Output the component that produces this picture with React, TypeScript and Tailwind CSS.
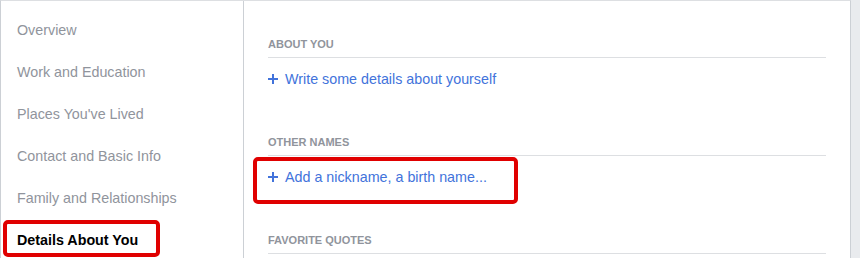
const navItems = [
  "Overview",
  "Work and Education",
  "Places You've Lived",
  "Contact and Basic Info",
  "Family and Relationships",
  "Details About You",
];

const sections = [
  { title: "About You", link: "Write some details about yourself" },
  { title: "Other Names", link: "Add a nickname, a birth name..." },
  { title: "Favorite Quotes", link: "" },
];

function PlusMark() {
  return (
    <svg className="w-[10px] h-[10px] shrink-0" viewBox="0 0 10 10">
      <path d="M5 0v10M0 5h10" stroke="currentColor" strokeWidth={2} />
    </svg>
  );
}

export default function App() {
  return (
    <div className="relative w-[860px] h-[258px] overflow-hidden bg-[#e9ebee] font-['Liberation_Sans',Arial,sans-serif]">
      <div className="flex w-[851px] h-[300px] bg-white border-l border-t border-r border-l-[#ccd0d5] border-t-[#dddfe2] border-r-[#ccd0d5]">
        {/* Sidebar */}
        <div className="w-[243px] shrink-0 border-r border-[#ccd0d5] pt-[9px]">
          {navItems.map((item, idx) => {
            const active = idx === navItems.length - 1;
            return (
              <div
                key={item}
                className={
                  "h-[42px] flex items-center pl-[16px] text-[14.3px] " +
                  (active ? "font-bold text-black" : "text-[#90949c]")
                }
              >
                {item}
              </div>
            );
          })}
        </div>

        {/* Content */}
        <div className="flex-1 px-[24px] pt-[35px]">
          {sections.map((s, idx) => (
            <div key={s.title} className={idx === 0 ? "" : "mt-[46px]"}>
              <div className="border-b border-[#dddfe2] pb-[5px] text-[11px] leading-[16px] font-bold uppercase text-[#90949c]">
                {s.title}
              </div>
              {s.link && (
                <div className="mt-[12px] flex items-center gap-[7px] text-[14.3px] leading-[18px] text-[#4273db]">
                  <PlusMark />
                  <span>{s.link}</span>
                </div>
              )}
            </div>
          ))}
        </div>
      </div>

      {/* Annotation boxes */}
      <div className="absolute left-[3px] top-[220px] w-[157px] h-[37px] border-[4px] border-[#e00000] rounded-[5px]" />
      <div className="absolute left-[253px] top-[157px] w-[265px] h-[47px] border-[4px] border-[#e00000] rounded-[5px]" />
    </div>
  );
}
